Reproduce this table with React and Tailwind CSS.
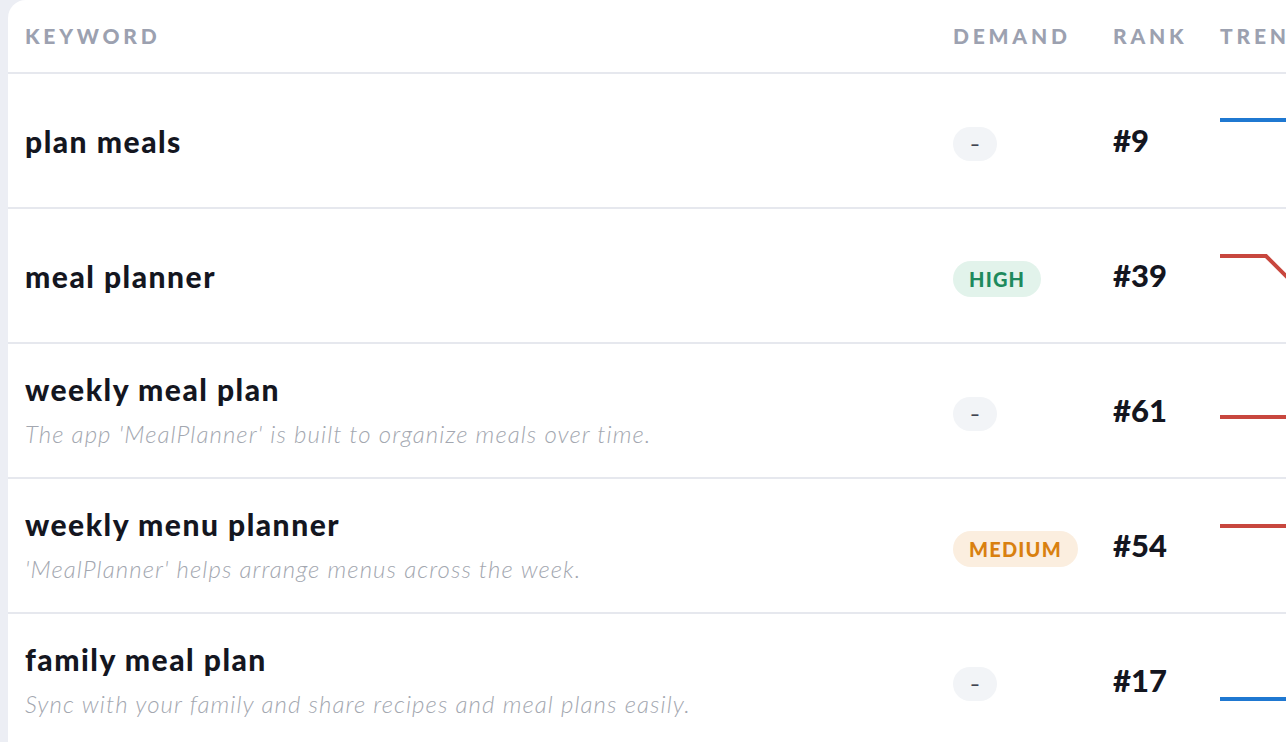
import React from 'react';

const rows = [
  { keyword: 'plan meals', desc: '', demand: null, rank: '#9', trend: 'flatHighBlue' },
  { keyword: 'meal planner', desc: '', demand: 'HIGH', rank: '#39', trend: 'drop' },
  { keyword: 'weekly meal plan', desc: "The app 'MealPlanner' is built to organize meals over time.", demand: null, rank: '#61', trend: 'flatMidRed' },
  { keyword: 'weekly menu planner', desc: "'MealPlanner' helps arrange menus across the week.", demand: 'MEDIUM', rank: '#54', trend: 'flatHighRed' },
  { keyword: 'family meal plan', desc: 'Sync with your family and share recipes and meal plans easily.', demand: null, rank: '#17', trend: 'flatLowBlue' }
];

const Trend = ({ kind }) => {
  const blue = '#1f78d1';
  const red = '#c8473e';
  return (
    <svg width="80" height="60" viewBox="0 0 80 60" className="block">
      {kind === 'flatHighBlue' && <polyline points="0,9 80,9" fill="none" stroke={blue} strokeWidth="4" />}
      {kind === 'drop' && <polyline points="0,10 46,10 80,44" fill="none" stroke={red} strokeWidth="4" />}
      {kind === 'flatMidRed' && <polyline points="0,36 80,36" fill="none" stroke={red} strokeWidth="4" />}
      {kind === 'flatHighRed' && <polyline points="0,10 80,10" fill="none" stroke={red} strokeWidth="4" />}
      {kind === 'flatLowBlue' && <polyline points="0,48 80,48" fill="none" stroke={blue} strokeWidth="4" />}
    </svg>
  );
};

const Demand = ({ level }) => {
  if (level === 'HIGH') {
    return (
      <span className="mt-[6px] inline-flex h-[36px] items-center rounded-full bg-[#e2f3eb] px-[16px] text-[20px] font-black tracking-[0.06em] text-[#1e8a5d]">
        HIGH
      </span>
    );
  }
  if (level === 'MEDIUM') {
    return (
      <span className="mt-[6px] inline-flex h-[36px] items-center rounded-full bg-[#fbeedf] px-[16px] text-[20px] font-black tracking-[0.06em] text-[#d9800f]">
        MEDIUM
      </span>
    );
  }
  return (
    <span className="mt-[6px] inline-flex h-[34px] w-[44px] items-center justify-center rounded-full bg-[#f2f4f7] text-[17px] font-black text-[#3f4552]">
      –
    </span>
  );
};

export default function App() {
  return (
    <div className="h-screen overflow-hidden bg-[#eceef4] pl-2" style={{ fontFamily: 'Lato, "Open Sans", sans-serif' }}>
      <div className="w-[1400px] rounded-tl-[18px] bg-white">
        <div className="grid h-[74px] grid-cols-[945px_160px_107px_1fr] items-center border-b-2 border-[#e6e8ee] text-[21px] font-black tracking-[0.18em] text-[#9ca1b0]">
          <div className="pl-[17px]">KEYWORD</div>
          <div>DEMAND</div>
          <div>RANK</div>
          <div className="whitespace-nowrap">TRENDS</div>
        </div>
        {rows.map((row) => (
          <div
            key={row.keyword}
            className="grid h-[135px] grid-cols-[945px_160px_107px_1fr] items-center border-b-2 border-[#e6e8ee]"
          >
            <div className="flex flex-col pl-[17px]">
              <span className="text-[30px] font-black leading-[32px] tracking-[0.05em] text-[#14161f]">{row.keyword}</span>
              {row.desc && (
                <span className="mt-[15px] text-[24px] font-light italic leading-[28px] tracking-[0.045em] text-[#a3a7b0]">{row.desc}</span>
              )}
            </div>
            <div className="flex items-center">
              <Demand level={row.demand} />
            </div>
            <div className="text-[31px] font-black text-[#14161f]">{row.rank}</div>
            <div className="flex items-center">
              <Trend kind={row.trend} />
            </div>
          </div>
        ))}
      </div>
    </div>
  );
}
